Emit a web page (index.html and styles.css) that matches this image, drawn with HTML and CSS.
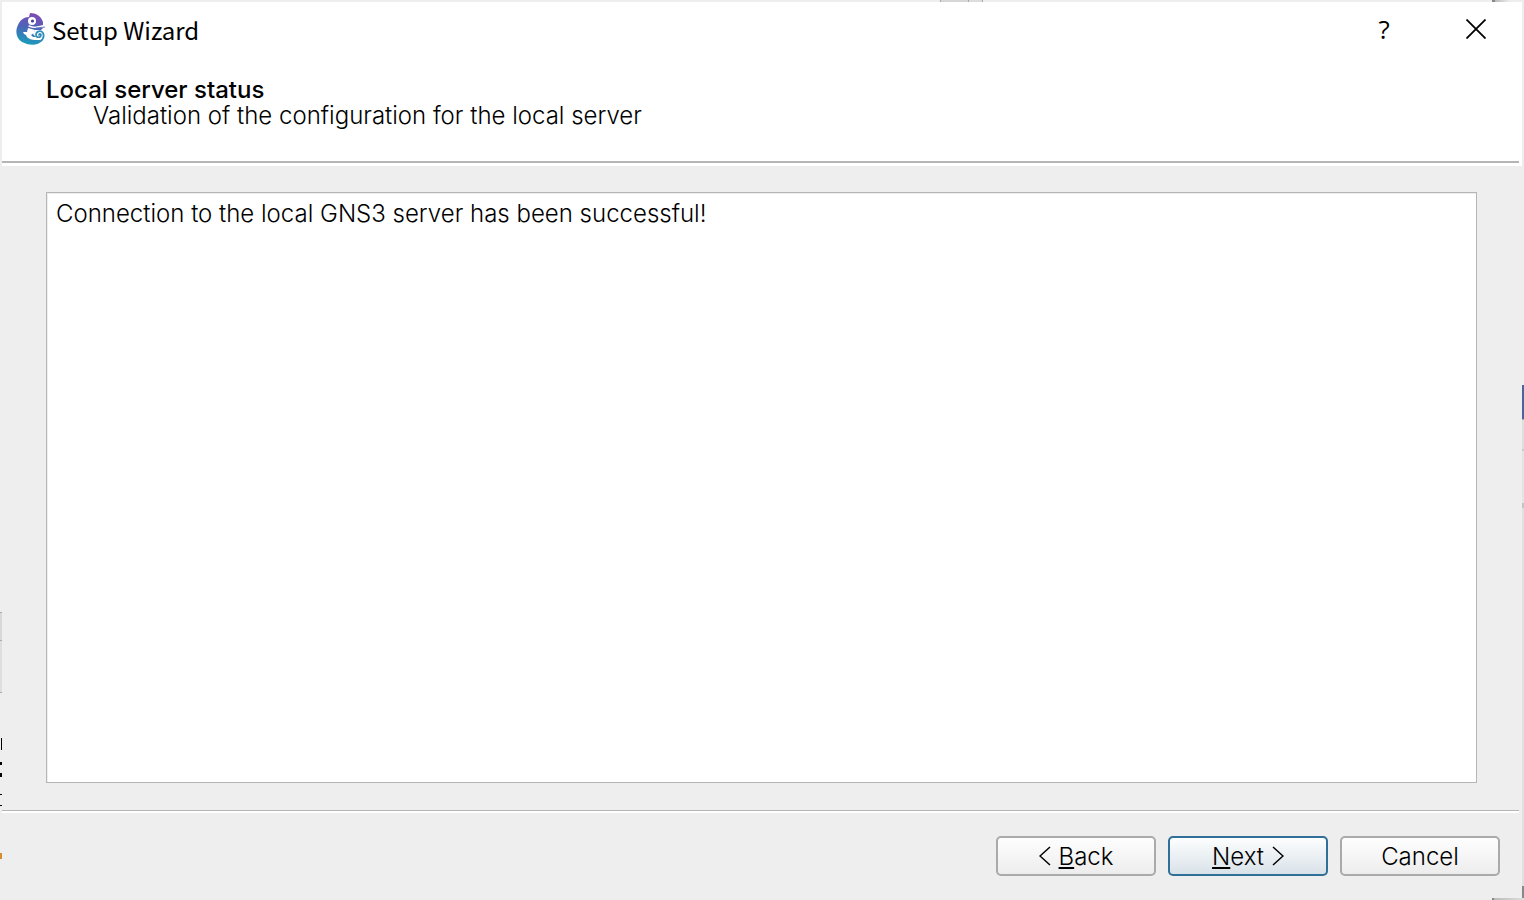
FILE: index.html
```html
<!DOCTYPE html>
<html lang="en">
<head>
  <meta charset="UTF-8">
  <meta name="viewport" content="width=device-width, initial-scale=1.0">
  <title>Setup Wizard</title>
  <link rel="stylesheet" href="styles.css">
</head>
<body>
  <!-- edges of the windows behind the dialog -->
  <div class="behind" aria-hidden="true">
    <span class="bit tab"></span>
    <span class="bit top-corner"></span>
    <span class="bit left-panel"></span>
    <span class="bit mark mark-1"></span>
    <span class="bit mark mark-2"></span>
    <span class="bit mark mark-3"></span>
    <span class="bit mark mark-4"></span>
    <span class="bit mark mark-5"></span>
    <span class="bit orange"></span>
    <span class="bit blue"></span>
    <span class="bit right-panel"></span>
    <span class="bit bottom-corner"></span>
    <span class="bit side-corner"></span>
  </div>

  <main class="wizard">
    <header class="header">
      <div class="titlebar">
        <svg class="logo" width="30" height="34" viewBox="0 0 30 34" aria-hidden="true">
          <defs>
            <linearGradient id="skin" x1="0.6" y1="0" x2="0.4" y2="1">
              <stop offset="0" stop-color="#8049b4"/>
              <stop offset="0.45" stop-color="#4f63b8"/>
              <stop offset="1" stop-color="#159fba"/>
            </linearGradient>
          </defs>
          <path fill="url(#skin)" d="M13 5 L14 1 C20 1 25 4 27 10 L27 13 L19 15 L18 16 L27 16 L25 18 L19 18 L17 22 L20 25 L20 28 L27 28 C21 35 12 33 6 30 C0 26 -1 19 2 13 C4 8 8 5 13 5 Z"/>
          <circle cx="16" cy="9" r="4" fill="#fff"/>
          <circle cx="16.500" cy="9" r="1.600" fill="#4a3f96"/>
          <path fill="none" stroke="#fff" stroke-width="1.400" stroke-linecap="round" d="M13 14 C17 16 20 15.500 24 15"/>
          <path fill="none" stroke="#6a78c0" stroke-width="1.200" d="M20 16 L29 15"/>
          <path fill="#fff" d="M12 16 L19 18 L18 21 L15 23 L17 25 L20 25 L20 28 C16 28 11 27 10 23 L8 22 L7 20 L9 20 L11 20 Z"/>
          <path fill="none" stroke="#2f8fbc" stroke-width="1.700" stroke-linecap="round" d="M20 29 C26 31 29 25 27 21 C25 18 20 19 20 23 C20 26 25 26 25 23 C25 22 23 21 23 23"/>
        </svg>
        <span class="title">Setup Wizard</span>
        <button class="window-button" type="button" aria-label="Help">?</button>
        <button class="window-button" type="button" aria-label="Close">
          <svg width="20" height="20" viewBox="0 0 20 20" aria-hidden="true">
            <path d="M0.500 0.500 L19.500 19.500 M19.500 0.500 L0.500 19.500" stroke="#000" stroke-width="1.800"/>
          </svg>
        </button>
      </div>
      <h1 class="page-title">Local server status</h1>
      <p class="subtitle">Validation of the configuration for the local server</p>
    </header>

    <section class="content">
      <textarea class="status" aria-label="Local server status" readonly>Connection to the local GNS3 server has been successful!</textarea>
    </section>

    <footer class="footer">
      <button class="button" type="button">
        <svg width="12" height="20" viewBox="0 0 12 20" aria-hidden="true"><path d="M11 1 L1 10 L11 19"/></svg>
        <span><u>B</u>ack</span>
      </button>
      <button class="button primary" type="button">
        <span><u>N</u>ext</span>
        <svg width="12" height="20" viewBox="0 0 12 20" aria-hidden="true"><path d="M1 1 L11 10 L1 19"/></svg>
      </button>
      <button class="button" type="button">Cancel</button>
    </footer>
  </main>
</body>
</html>
```

FILE: styles.css
```css
* {
  box-sizing: border-box;
}
body {
  margin: 0;
  padding: 2px;
  min-height: 100vh;
  display: flex;
  background: #eee;
  color: #000;
  font-family: Inter, "Liberation Sans", sans-serif;
  font-size: 24px;
  font-weight: 300;
}
.wizard {
  flex: 1;
  display: flex;
  flex-direction: column;
  background: #eee;
}

/* header */
.header {
  height: 164px;
  background: #fff;
}
.header::after {
  content: "";
  display: block;
  height: 2px;
  margin: 32px 3px 0 0;
  background: #b5b5b5;
}
.titlebar {
  display: flex;
  align-items: center;
  height: 54px;
  padding-left: 14px;
}
.title {
  flex: 1;
  margin-left: 6px;
  font-family: "Noto Sans CJK KR", sans-serif;
  font-size: 24px;
  font-weight: 400;
}
.window-button {
  display: flex;
  align-items: center;
  justify-content: center;
  width: 92px;
  height: 54px;
  padding: 0;
  border: none;
  background: none;
  font-family: "Open Sans", sans-serif;
  font-size: 26px;
  font-weight: 500;
  color: #000;
}
.page-title,
.subtitle {
  margin: 0;
  line-height: 26px;
}
.page-title {
  padding: 21px 0 0 44px;
  font-size: 24px;
  font-weight: 500;
}
.subtitle {
  padding-left: 91px;
}

/* message area */
.content {
  flex: 1;
  display: flex;
  padding: 26px 45px 27px 44px;
}
.status {
  flex: 1;
  padding: 8px 9px;
  border: 1px solid #b5b5b5;
  outline: none;
  resize: none;
  background: #fff;
  box-shadow: inset 1px 1px #eee;
  color: #000;
  font: inherit;
  line-height: 26px;
}

/* buttons */
.footer {
  display: flex;
  justify-content: flex-end;
  gap: 12px;
  padding: 25px 19px 22px 0;
  margin-right: 3px;
  border-top: 1px solid #b5b5b5;
  box-shadow: inset 0 2px #fff;
}
.button {
  display: flex;
  align-items: center;
  justify-content: center;
  gap: 8px;
  width: 160px;
  height: 40px;
  padding: 0;
  border: 2px solid #aaa;
  border-radius: 5px;
  background: linear-gradient(#fefefe, #ededed);
  color: #000;
  font: inherit;
}
.button svg {
  fill: none;
  stroke: #000;
  stroke-width: 1.5;
}
.button u {
  text-decoration-thickness: 2px;
  text-underline-offset: 2px;
}
.primary {
  border-color: #2f6f98;
  background: linear-gradient(#fdfefe, #d9e2e9);
}

/* slivers of other windows round the dialog */
.bit {
  position: absolute;
}
.tab {
  left: 940px;
  top: 0;
  width: 43px;
  height: 2px;
  background: linear-gradient(90deg, #aaa 1px, #d6d6d6 1px 28px, #aaa 28px 29px, #ddd 29px 42px, #aaa 42px);
}
.top-corner {
  right: 0;
  top: 0;
  width: 32px;
  height: 2px;
  background: linear-gradient(90deg, #888 3px, #bbb 3px, #eee 18px);
}
.left-panel {
  left: 0;
  top: 612px;
  width: 2px;
  height: 81px;
  background: linear-gradient(#aaa 1px, #d8d8d8 1px 28px, #aaa 28px 29px, #dedede 29px 80px, #aaa 80px);
}
.mark {
  left: 0;
  width: 2px;
  height: 1px;
  background: #000;
}
.mark-1 {
  left: 1px;
  top: 738px;
  width: 1px;
  height: 12px;
}
.mark-2 {
  top: 762px;
  height: 3px;
}
.mark-3 {
  top: 773px;
  height: 4px;
}
.mark-4 {
  top: 794px;
}
.mark-5 {
  top: 805px;
}
.orange {
  left: 0;
  top: 853px;
  width: 2px;
  height: 6px;
  background: #d98b2f;
}
.blue {
  right: 0;
  top: 385px;
  width: 2px;
  height: 34px;
  background: #4d639c;
}
.right-panel {
  right: 0;
  top: 419px;
  width: 2px;
  bottom: 0;
  background: linear-gradient(#aaa 1px, #dedede 1px 30px, #ccc 30px 32px, #e4e4e4 32px 84px, #c4c4c4 84px 89px, #e0e0e0 89px);
}
.bottom-corner {
  right: 0;
  bottom: 0;
  width: 32px;
  height: 2px;
  background: linear-gradient(90deg, #888 2px, #bbb 2px, #ddd);
}
.side-corner {
  right: 0;
  bottom: 2px;
  width: 2px;
  height: 12px;
  background: #888;
}
```
